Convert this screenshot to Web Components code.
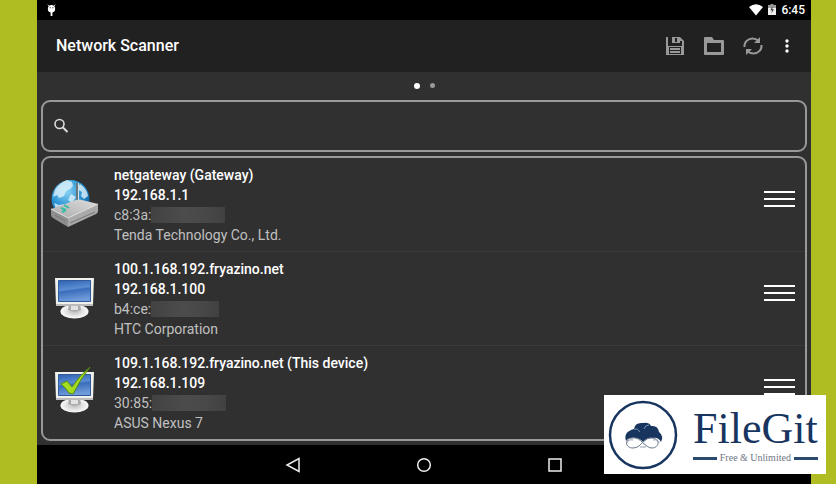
<!DOCTYPE html>
<html lang="en">
<head>
<meta charset="utf-8">
<meta name="viewport" content="width=device-width, initial-scale=1">
<title>Network Scanner</title>
<style>
html, body { margin: 0; }
body { background: #afbd22; font-family: Roboto, "Liberation Sans", sans-serif; font-size: 14px; line-height: 20px; color: #fff; }
</style>
</head>
<body>
<scanner-app></scanner-app>

<script>
function define(name, html, setup) {
  const template = document.createElement('template');
  template.innerHTML = html;
  customElements.define(name, class extends HTMLElement {
    constructor() {
      super();
      this.attachShadow({ mode: 'open' }).append(template.content.cloneNode(true));
    }
    connectedCallback() { if (setup) setup(this, this.shadowRoot); }
  });
}

define('status-bar', `
<style>
:host { display: flex; align-items: center; justify-content: space-between; height: 20px; padding: 0 6px 0 10px; background: #000; font-size: 12px; font-weight: 500; box-sizing: border-box; }
.right { display: flex; align-items: center; gap: 5px; }
svg { display: block; }
</style>
<svg width="9" height="13" viewBox="0 0 10 14" aria-hidden="true"><path d="M1 .5 2.400 2M9 .5 7.600 2" stroke="#fff"/><path fill="#fff" d="M1 4.500C1 2.500 2.800 1 5 1s4 1.500 4 3.500V6c0 2-1.400 3-3 3.200V13H4V9.200C2.400 9 1 8 1 6z"/><path fill="#000" d="M3 3.500h1v1H3zM6 3.500h1v1H6z"/></svg>
<span class="right">
<svg width="14" height="12" viewBox="0 0 14 12" aria-hidden="true"><path fill="#fff" d="M0 3Q7-2.500 14 3L7 11.500z"/></svg>
<svg width="8" height="12" viewBox="0 0 8 12" aria-hidden="true"><path fill="#999" d="M2.500 0h3v1H8v4H0V1h2.500z"/><path fill="#eee" d="M0 4h8v7H0z"/><path fill="#333" d="M4.700 2 2.300 6.200h1.800L3.400 9.500 5.900 5.300H4.200z"/></svg>
<span>6:45</span>
</span>`);

define('icon-button', `
<style>
:host { display: block; }
button { display: grid; place-items: center; width: 100%; height: 100%; border: 0; padding: 0; background: none; color: inherit; }
::slotted(svg) { display: block; }
</style>
<button type="button"><slot></slot></button>`, (el, root) => {
  root.querySelector('button').setAttribute('aria-label', el.getAttribute('label'));
});

define('app-bar', `
<style>
:host { display: flex; align-items: center; height: 52px; padding: 0 14px 0 19px; background: #212121; box-sizing: border-box; }
h1 { flex: 1; margin: 0; font-size: 16px; line-height: 24px; font-weight: 500; }
.tools { display: flex; gap: 15px; color: #999; }
icon-button { width: 24px; height: 24px; }
icon-button:last-child { width: 20px; color: #fff; margin-left: -3px; }
</style>
<h1><slot></slot></h1>
<div class="tools">
<icon-button label="Save"><svg width="20" height="20" viewBox="0 0 20 20"><path fill="currentColor" d="M1 1h2v9h14V4l2 1v14H1V1zM15 1l4 4h-4z"/><path fill="currentColor" fill-rule="evenodd" d="M7 1h8v6H7zM10 2v4h2V2z"/><path fill="#212121" d="M4 11h12v7H4z"/><path fill="currentColor" d="M5 12h10v2H5zM5 15h10v2H5z"/></svg></icon-button>
<icon-button label="Open"><svg width="22" height="20" viewBox="0 0 22 20"><path fill="currentColor" fill-rule="evenodd" d="M1 2q0-1 1-1h7l2 3h9q1 0 1 1v13q0 1-1 1H2q-1 0-1-1zM4 7v9h14V7z"/></svg></icon-button>
<icon-button label="Refresh"><svg width="20" height="20" viewBox="0 0 20 20"><g fill="none" stroke="currentColor" stroke-width="2"><path d="M1.500 11C1 6 5 2.500 9.500 2.500q3.500 0 6 2.500M18.500 9c.5 5-3.500 8.500-8 8.500q-3.500 0-6-2.500"/></g><path fill="currentColor" d="M17 1v6h-6zM3 19v-6h6z"/></svg></icon-button>
<icon-button label="More options"><svg width="6" height="16" viewBox="0 0 6 16"><g fill="currentColor"><circle cx="3" cy="3" r="1.700"/><circle cx="3" cy="8" r="1.700"/><circle cx="3" cy="13" r="1.700"/></g></svg></icon-button>
</div>`);

define('page-dots', `
<style>
:host { display: flex; justify-content: center; align-items: center; gap: 10px; height: 27px; }
i { width: 5px; height: 5px; border-radius: 50%; background: #999; }
i:first-of-type { width: 6px; height: 6px; background: #fff; }
</style><i></i><i></i>`);

define('search-box', `
<style>
:host { display: block; }
label { display: flex; align-items: center; gap: 10px; height: 52px; padding: 0 10px; border: 2px solid #999; border-radius: 9px; box-sizing: border-box; }
svg { flex: none; }
input { flex: 1; min-width: 0; height: 32px; border: 0; padding: 0; outline: 0; background: none; color: #fff; font: inherit; }
</style>
<label><svg width="16" height="16" viewBox="0 0 16 16" aria-hidden="true"><g fill="none" stroke="#ddd"><circle cx="6.500" cy="6" r="4.500" stroke-width="1.600"/><path d="m10 9.500 4.500 4.500" stroke-width="2"/></g></svg><input type="search" aria-label="Search devices"></label>`);

const monitor = `
<defs>
<linearGradient id="screen" x1="0" y1="0" x2=".2" y2="1"><stop stop-color="#2d62b2"/><stop offset=".46" stop-color="#5b8dd2"/><stop offset=".54" stop-color="#3a6ebb"/><stop offset="1" stop-color="#6f9bda"/></linearGradient>
<radialGradient id="stand"><stop stop-color="#bbb"/><stop offset=".6" stop-color="#e4e4e4"/><stop offset="1" stop-color="#fafafa"/></radialGradient>
</defs>
<ellipse cx="24.500" cy="36.500" rx="14" ry="7" fill="url(#stand)"/>
<path fill="#aaa" d="M19 29h11l1 6q-6 3-13 0z"/><path fill="#e2e2e2" d="M21 30h7v5h-7z"/>
<path fill="#f0f0ec" d="M5 3h39l-1 27H6z"/><path fill="#bbb" d="M6 29h37v2H6z"/>
<path fill="url(#screen)" stroke="#315a99" d="M8.500 5.500h32v21h-32z"/>`;
const pictures = {
  gateway: `<svg width="50" height="50" viewBox="0 0 50 50" aria-hidden="true">
<defs><radialGradient id="globe" cx=".4" cy=".3" r=".75"><stop stop-color="#8bd3f3"/><stop offset=".55" stop-color="#2b93d4"/><stop offset="1" stop-color="#095391"/></radialGradient>
<linearGradient id="top" x1="0" y1="1" x2="1" y2="0"><stop stop-color="#aaa"/><stop offset="1" stop-color="#ddd"/></linearGradient></defs>
<circle cx="20.500" cy="20" r="19" fill="url(#globe)"/>
<path fill="#dff3fa" opacity=".8" d="M5 11q4-7 12-10l5 2 1 4-3 3-4 2-2 5-5 2-2-3-4 2zM30 5q7 5 8 12l-4 3-3-3 1-4-5-3zM4 24l5 2 5-1-3 4-5 1zM21 15l5 3-4 6-4-3z"/>
<path fill="#667780" d="M26 4h3v22h-3z"/><path fill="#d5e0e4" d="M28 4h1v22h-1z"/>
<path fill="url(#top)" d="m1 30 25-9q3-1 6 0l16 4-30 14z"/>
<path fill="#8e8e8e" d="m1 30 17 9v9L3 39q-2-1-2-3z"/><path fill="#aaa" d="m18 39 30-14v7q0 2-2 3L18 48z"/>
<path fill="none" stroke="#777" d="m20 44 25-11M5 36l10 6"/><path fill="none" stroke="#e4e4e4" d="m1 30 17 9 30-14"/>
<path fill="none" stroke="#36bda4" stroke-width="2" d="m11 29 5 2M14 26l5 3M12 33l4-2"/></svg>`,
  computer: `<svg width="50" height="46" viewBox="0 0 50 46" aria-hidden="true">${monitor}</svg>`,
  self: `<svg width="50" height="46" viewBox="0 0 50 46" aria-hidden="true">${monitor}
<path fill="#a3dc20" stroke="#578c0c" d="m11 15 6-3 5 6Q30 6 40-2q-9 11-17 27l-4-1q-3-5-8-9z"/></svg>`
};

define('device-row', `
<style>
:host { display: grid; grid-template-columns: 50px minmax(0, 1fr) 31px; column-gap: 14px; align-items: center; padding: 7px 10px 6px 7px; border-bottom: 1px solid #3b3b3b; }
:host(:last-child) { border-bottom: 0; }
.picture { padding-bottom: 2px; }
.picture svg { display: block; overflow: visible; }
p { margin: 0; color: #c0c0c0; }
.main { color: #fff; font-weight: 500; }
.mac { display: flex; align-items: center; }
.mask { width: 74px; height: 16px; background: linear-gradient(90deg, #424242, #4c4c4c 45%, #484848 75%, #414141); }
:host([kind="computer"]) .mask { width: 68px; }
button { display: flex; flex-direction: column; gap: 5px; border: 0; padding: 0 0 12px; background: none; }
button i { width: 31px; height: 2px; background: #fff; }
</style>
<div class="picture"></div>
<div class="info">
<p class="main"><slot name="name"></slot></p>
<p class="main"><slot name="ip"></slot></p>
<p class="mac"><slot name="mac"></slot><span class="mask"></span></p>
<p><slot name="vendor"></slot></p>
</div>
<button type="button" aria-label="Reorder"><i></i><i></i><i></i></button>`, (el, root) => {
  root.querySelector('.picture').innerHTML = pictures[el.getAttribute('kind')];
});

define('device-list', `
<style>:host { display: block; border: 2px solid #999; border-radius: 9px; }</style><slot></slot>`);

define('nav-bar', `
<style>
:host { display: grid; grid-template-columns: repeat(3, 131px); justify-content: center; height: 39px; background: #000; color: #eee; }
svg { fill: none; stroke: currentColor; stroke-width: 1.500; }
</style>
<icon-button label="Back"><svg width="16" height="16" viewBox="0 0 16 16"><path d="M14 1.500v13L2 8z"/></svg></icon-button>
<icon-button label="Home"><svg width="16" height="16" viewBox="0 0 16 16"><circle cx="8" cy="8" r="6.300"/></svg></icon-button>
<icon-button label="Recent apps"><svg width="16" height="16" viewBox="0 0 16 16"><path d="M2 2h12v12H2z"/></svg></icon-button>`);

define('site-badge', `
<style>
:host { display: flex; align-items: center; gap: 15px; width: 222px; height: 79px; padding: 0 9px 0 4px; box-sizing: border-box; background: #fff; color: #17355f; font-family: "Liberation Serif", serif; }
svg { flex: none; }
.name { font-size: 44px; line-height: 47px; }
.words { flex: 1; }
.tag { display: flex; align-items: center; gap: 3px; font-size: 10px; line-height: 12px; color: #6f7683; white-space: nowrap; }
.tag::before, .tag::after { content: ""; flex: 1; height: 3px; background: #2b4a70; }
</style>
<svg width="70" height="70" viewBox="0 0 70 70" aria-hidden="true">
<circle cx="35" cy="35" r="33" fill="none" stroke="#17355f" stroke-width="2.500"/>
<path fill="#17355f" d="M18 41q-3-9 8-12 1-7 9-6 6-1 8 3 7-1 8 6 5 4 2 10-3-5-8-4-5 1-9 5-4-5-9-5-6-1-9 3z"/>
<path d="M26 29q4-1 6 3M41 25q-4 0-5 4" fill="none" stroke="#7c91ac"/>
<path fill="#fff" stroke="#69758a" d="M35 43q-5-6-11-5c-8 1-7 10 1 10 5 0 7-3 10-6q5-5 9-4c9 1 7 10 0 10-4 0-6-3-9-5z"/>
<path fill="none" stroke="#99a2b1" d="M19 43q1-4 6-3M51 43q0-4-6-3M32 47h6"/>
</svg>
<div class="words"><div class="name">FileGit</div><div class="tag">Free &amp; Unlimited</div></div>`);

define('scanner-app', `
<style>
:host { display: flex; flex-direction: column; position: relative; min-height: 100vh; padding: 0 25px 0 37px; box-sizing: border-box; }
.device { flex: 1; display: flex; flex-direction: column; background: #303030; }
main { flex: 1; display: flex; flex-direction: column; gap: 4px; padding: 0 4px 4px; }
page-dots { margin-bottom: -3px; }
site-badge { position: absolute; right: 10px; bottom: 10px; }
</style>
<div class="device">
<status-bar></status-bar>
<app-bar>Network Scanner</app-bar>
<main>
<page-dots></page-dots>
<search-box></search-box>
<device-list>
<device-row kind="gateway"><span slot="name">netgateway (Gateway)</span><span slot="ip">192.168.1.1</span><span slot="mac">c8:3a:</span><span slot="vendor">Tenda Technology Co., Ltd.</span></device-row>
<device-row kind="computer"><span slot="name">100.1.168.192.fryazino.net</span><span slot="ip">192.168.1.100</span><span slot="mac">b4:ce:</span><span slot="vendor">HTC Corporation</span></device-row>
<device-row kind="self"><span slot="name">109.1.168.192.fryazino.net (This device)</span><span slot="ip">192.168.1.109</span><span slot="mac">30:85:</span><span slot="vendor">ASUS Nexus 7</span></device-row>
</device-list>
</main>
<nav-bar></nav-bar>
</div>
<site-badge></site-badge>`);
</script>
</body>
</html>
